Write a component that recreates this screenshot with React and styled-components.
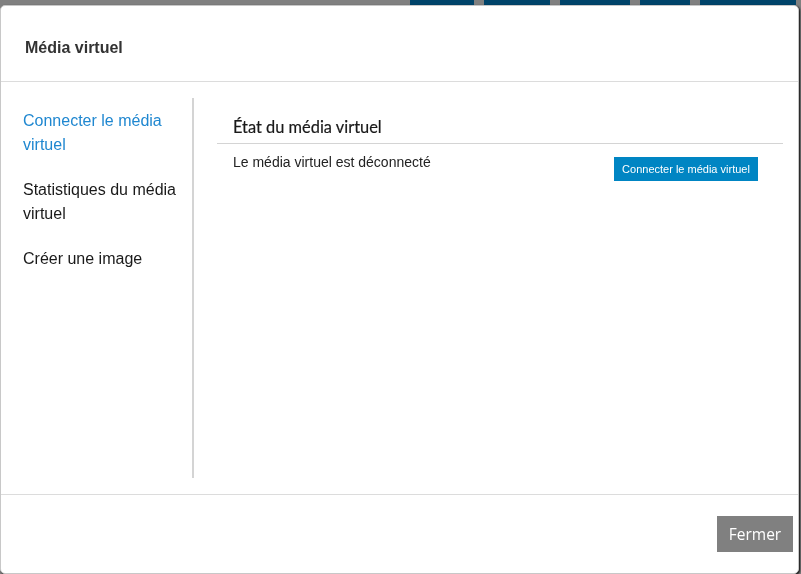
import React from 'react';
import styled, { createGlobalStyle } from 'styled-components';

const GlobalStyle = createGlobalStyle`
  html, body {
    margin: 0;
    padding: 0;
    height: 100%;
    background: #808080;
    font-family: "Liberation Sans", Arial, sans-serif;
  }
  #root {
    height: 100%;
  }
`;

const menu = [
  { id: 'connect', label: 'Connecter le média virtuel', active: true },
  { id: 'stats', label: 'Statistiques du média virtuel' },
  { id: 'image', label: 'Créer une image' },
];

const tabs = [64, 66, 70, 50, 96];

function App() {
  return (
    <>
      <GlobalStyle />
      <Page>
        <NavBar>
          {tabs.map((w, i) => (
            <NavTab key={i} style={{ width: w }} />
          ))}
        </NavBar>
      </Page>

      <Modal>
        <Header>
          <Title>Média virtuel</Title>
        </Header>

        <Body>
          <Sidebar>
            {menu.map((m) => (
              <MenuItem key={m.id} $active={m.active}>
                {m.label}
              </MenuItem>
            ))}
          </Sidebar>

          <Content>
            <SectionTitle>État du média virtuel</SectionTitle>
            <StatusRow>
              <StatusText>Le média virtuel est déconnecté</StatusText>
              <PrimaryButton>Connecter le média virtuel</PrimaryButton>
            </StatusRow>
          </Content>
        </Body>

        <Footer>
          <CloseButton>Fermer</CloseButton>
        </Footer>
      </Modal>
    </>
  );
}

const Page = styled.div`
  height: 100%;
  background: #808080;
`;

const NavBar = styled.div`
  display: flex;
  justify-content: flex-end;
  gap: 10px;
  padding-right: 5px;
  height: 30px;
`;

const NavTab = styled.div`
  height: 100%;
  background: #00446a;
`;

const Modal = styled.div`
  position: fixed;
  top: 5px;
  left: 0;
  width: 797px;
  height: 567px;
  display: flex;
  flex-direction: column;
  background: #fff;
  border: 1px solid #c8c8c8;
  border-radius: 5px;
  box-shadow: 1px 1px 2px rgba(0, 0, 0, 0.9);
`;

const Header = styled.div`
  padding: 30px 24px 21px;
  border-bottom: 1px solid #dcdcdc;
`;

const Title = styled.h4`
  margin: 0;
  font-size: 16px;
  line-height: 24px;
  font-weight: 700;
  color: #333;
`;

const Body = styled.div`
  flex: 1;
  display: grid;
  grid-template-columns: 178px 1fr;
  column-gap: 23px;
  padding: 16px 15px 16px 15px;
`;

const Sidebar = styled.nav`
  display: flex;
  flex-direction: column;
  padding-top: 11px;
  border-right: 2px solid #d4d4d4;
`;

const MenuItem = styled.a`
  display: block;
  padding: 0 7px 21px;
  font-size: 16px;
  line-height: 24px;
  color: ${(p) => (p.$active ? '#1f87d0' : '#1a1a1a')};
  cursor: pointer;
`;

const Content = styled.div`
  display: flex;
  flex-direction: column;
`;

const SectionTitle = styled.h5`
  margin: 17px 0 0;
  padding: 0 16px 4px;
  font-family: Lato, "Open Sans", sans-serif;
  font-size: 16.4px;
  line-height: 24px;
  font-weight: 400;
  color: #1a1a1a;
  -webkit-text-stroke: 0.2px #1a1a1a;
  border-bottom: 1px solid #d4d4d4;
`;

const StatusRow = styled.div`
  display: flex;
  justify-content: space-between;
  align-items: flex-start;
  padding: 8px 25px 0 16px;
`;

const StatusText = styled.span`
  font-size: 14px;
  line-height: 20px;
  color: #222;
`;

const PrimaryButton = styled.button`
  margin-top: 5px;
  width: 144px;
  height: 24px;
  padding: 0;
  border: none;
  background: #0085c3;
  color: #fff;
  font-family: "Liberation Sans", Arial, sans-serif;
  font-size: 11px;
  cursor: pointer;
`;

const Footer = styled.div`
  display: flex;
  justify-content: flex-end;
  padding: 21px 5px 21px;
  border-top: 1px solid #dcdcdc;
`;

const CloseButton = styled.button`
  width: 76px;
  height: 36px;
  border: none;
  background: #808080;
  color: #fff;
  font-family: "Open Sans", sans-serif;
  font-size: 15.5px;
  cursor: pointer;
`;

export default App;
